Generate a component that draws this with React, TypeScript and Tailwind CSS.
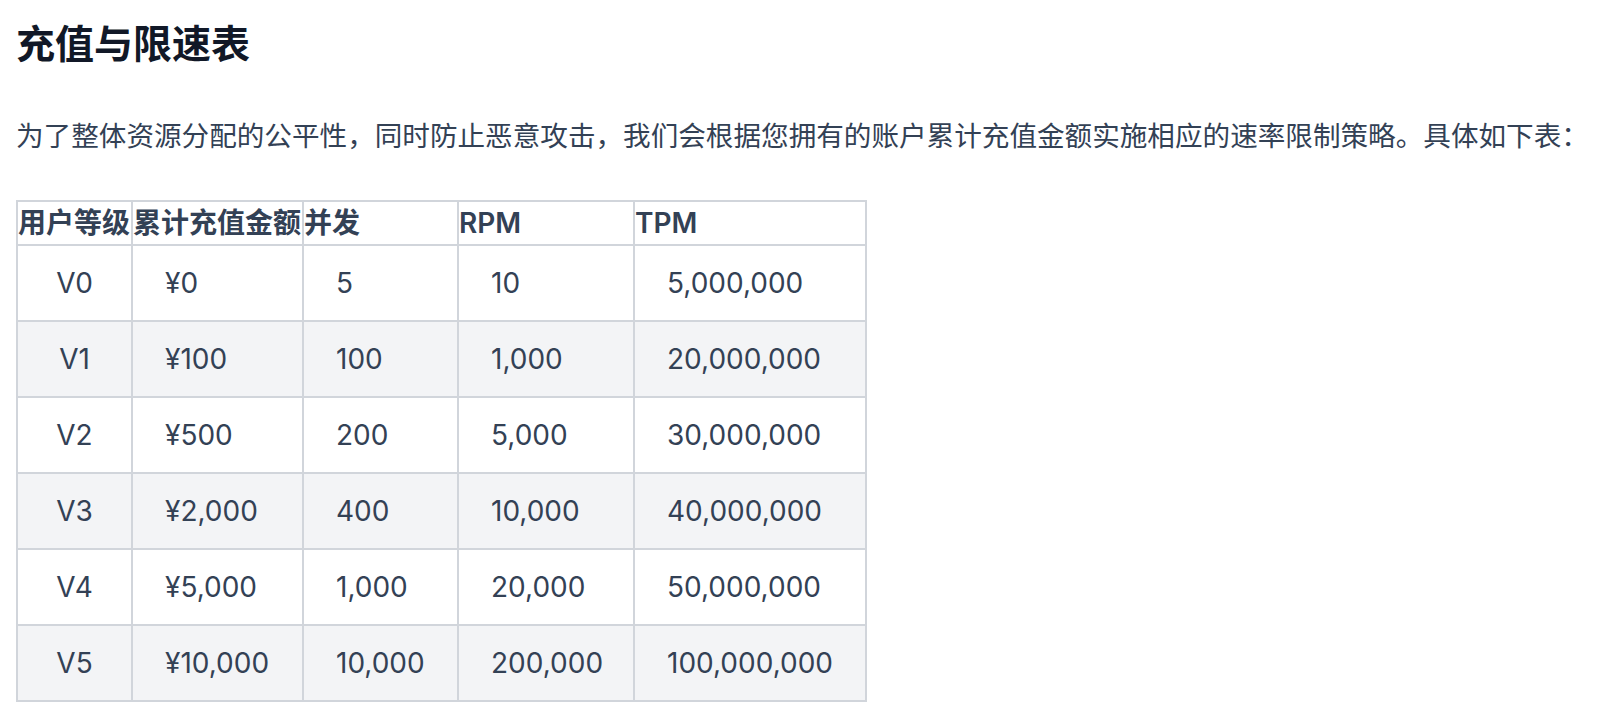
import React from "react";

const rows = [
  ["V0", "¥0", "5", "10", "5,000,000"],
  ["V1", "¥100", "100", "1,000", "20,000,000"],
  ["V2", "¥500", "200", "5,000", "30,000,000"],
  ["V3", "¥2,000", "400", "10,000", "40,000,000"],
  ["V4", "¥5,000", "1,000", "20,000", "50,000,000"],
  ["V5", "¥10,000", "10,000", "200,000", "100,000,000"],
];

const headers = ["用户等级", "累计充值金额", "并发", "RPM", "TPM"];
const widths = ["w-[115px]", "w-[171px]", "w-[155px]", "w-[176px]", "w-[232px]"];

export default function App() {
  return (
    <div
      className="min-h-screen bg-white px-4"
      style={{ fontFamily: 'Inter, "Noto Sans CJK SC", sans-serif' }}
    >
      <h1 className="pt-[20px] text-[39px] leading-[48px] font-bold text-[#111827]">充值与限速表</h1>

      <p className="mt-[43px] text-[27.6px] leading-[50px] whitespace-nowrap text-[#334155]">
        为了整体资源分配的公平性，同时防止恶意攻击，我们会根据您拥有的账户累计充值金额实施相应的速率限制策略。具体如下表：
      </p>

      <table className="mt-[39px] table-fixed border-collapse border-2 border-[#d1d5db] text-[28px] text-[#334155]">
        <colgroup>
          {widths.map((w, i) => (
            <col key={i} className={w} />
          ))}
        </colgroup>
        <thead>
          <tr>
            {headers.map((h) => (
              <th
                key={h}
                className="border-2 border-[#d1d5db] p-0 text-left font-semibold leading-[42px] whitespace-nowrap"
              >
                {h}
              </th>
            ))}
          </tr>
        </thead>
        <tbody>
          {rows.map((r, ri) => (
            <tr key={r[0]} className={ri % 2 === 1 ? "bg-[#f3f4f6]" : "bg-white"}>
              {r.map((c, ci) => (
                <td
                  key={ci}
                  className={
                    "border-2 border-[#d1d5db] py-4 leading-[42px] whitespace-nowrap " +
                    (ci === 0 ? "text-center" : "pl-[32px] text-left")
                  }
                >
                  {c}
                </td>
              ))}
            </tr>
          ))}
        </tbody>
      </table>
    </div>
  );
}
